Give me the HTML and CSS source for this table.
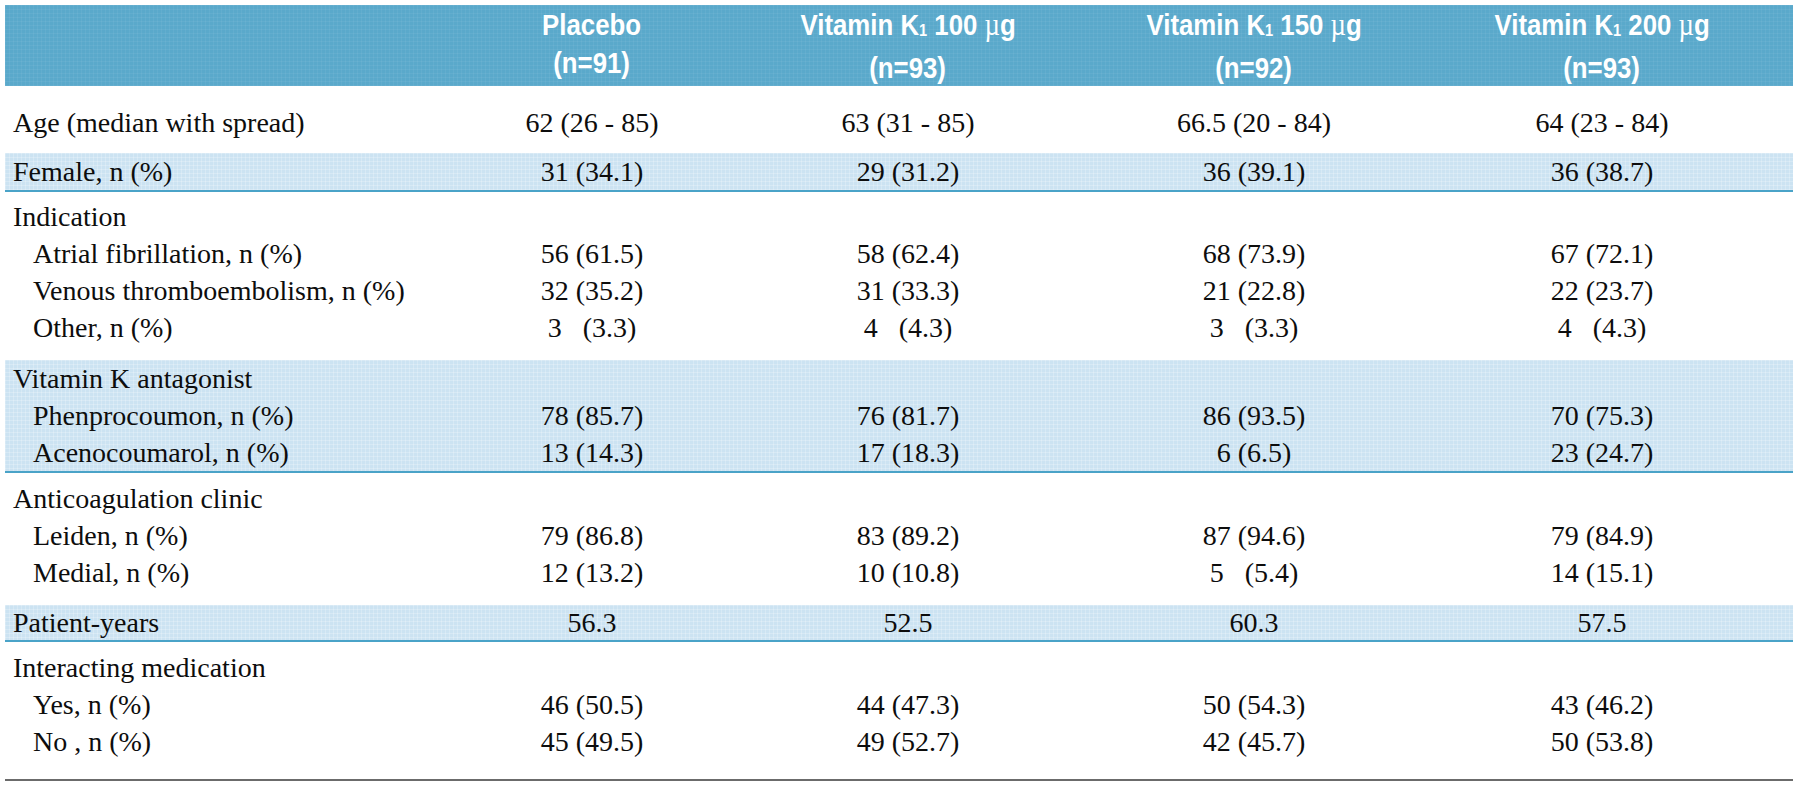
FILE: index.html
```html
<!DOCTYPE html>
<html lang="en">
<head>
<meta charset="utf-8">
<title>Baseline characteristics</title>
<link rel="stylesheet" href="styles.css">
</head>
<body>
<div class="sheet">
  <div class="row head">
    <div class="cell label"></div>
    <div class="cell hcol"><span class="ht">Placebo</span><span class="ht">(n=91)</span></div>
    <div class="cell hcol"><span class="ht">Vitamin K<sub>1</sub> 100 <span class="mu">µ</span>g</span><span class="ht">(n=93)</span></div>
    <div class="cell hcol"><span class="ht">Vitamin K<sub>1</sub> 150 <span class="mu">µ</span>g</span><span class="ht">(n=92)</span></div>
    <div class="cell hcol"><span class="ht">Vitamin K<sub>1</sub> 200 <span class="mu">µ</span>g</span><span class="ht">(n=93)</span></div>
  </div>

  <div class="group g-age">
    <div class="row"><div class="cell label">Age (median with spread)</div><div class="cell val">62 (26 - 85)</div><div class="cell val">63 (31 - 85)</div><div class="cell val">66.5 (20 - 84)</div><div class="cell val">64 (23 - 84)</div></div>
  </div>

  <div class="group band g-female">
    <div class="row"><div class="cell label">Female, n (%)</div><div class="cell val">31 (34.1)</div><div class="cell val">29 (31.2)</div><div class="cell val">36 (39.1)</div><div class="cell val">36 (38.7)</div></div>
  </div>

  <div class="group g-ind">
    <div class="row"><div class="cell label">Indication</div><div class="cell val"></div><div class="cell val"></div><div class="cell val"></div><div class="cell val"></div></div>
    <div class="row"><div class="cell label sub">Atrial fibrillation, n (%)</div><div class="cell val">56 (61.5)</div><div class="cell val">58 (62.4)</div><div class="cell val">68 (73.9)</div><div class="cell val">67 (72.1)</div></div>
    <div class="row"><div class="cell label sub">Venous thromboembolism, n (%)</div><div class="cell val">32 (35.2)</div><div class="cell val">31 (33.3)</div><div class="cell val">21 (22.8)</div><div class="cell val">22 (23.7)</div></div>
    <div class="row"><div class="cell label sub">Other, n (%)</div><div class="cell val">3&nbsp;&nbsp;&nbsp;(3.3)</div><div class="cell val">4&nbsp;&nbsp;&nbsp;(4.3)</div><div class="cell val">3&nbsp;&nbsp;&nbsp;(3.3)</div><div class="cell val">4&nbsp;&nbsp;&nbsp;(4.3)</div></div>
  </div>

  <div class="group band g-vka">
    <div class="row"><div class="cell label">Vitamin K antagonist</div><div class="cell val"></div><div class="cell val"></div><div class="cell val"></div><div class="cell val"></div></div>
    <div class="row"><div class="cell label sub">Phenprocoumon, n (%)</div><div class="cell val">78 (85.7)</div><div class="cell val">76 (81.7)</div><div class="cell val">86 (93.5)</div><div class="cell val">70 (75.3)</div></div>
    <div class="row"><div class="cell label sub">Acenocoumarol, n (%)</div><div class="cell val">13 (14.3)</div><div class="cell val">17 (18.3)</div><div class="cell val">6 (6.5)</div><div class="cell val">23 (24.7)</div></div>
  </div>

  <div class="group g-clinic">
    <div class="row"><div class="cell label">Anticoagulation clinic</div><div class="cell val"></div><div class="cell val"></div><div class="cell val"></div><div class="cell val"></div></div>
    <div class="row"><div class="cell label sub">Leiden, n (%)</div><div class="cell val">79 (86.8)</div><div class="cell val">83 (89.2)</div><div class="cell val">87 (94.6)</div><div class="cell val">79 (84.9)</div></div>
    <div class="row"><div class="cell label sub">Medial, n (%)</div><div class="cell val">12 (13.2)</div><div class="cell val">10 (10.8)</div><div class="cell val">5&nbsp;&nbsp;&nbsp;(5.4)</div><div class="cell val">14 (15.1)</div></div>
  </div>

  <div class="group band g-py">
    <div class="row"><div class="cell label">Patient-years</div><div class="cell val">56.3</div><div class="cell val">52.5</div><div class="cell val">60.3</div><div class="cell val">57.5</div></div>
  </div>

  <div class="group g-inter">
    <div class="row"><div class="cell label">Interacting medication</div><div class="cell val"></div><div class="cell val"></div><div class="cell val"></div><div class="cell val"></div></div>
    <div class="row"><div class="cell label sub">Yes, n (%)</div><div class="cell val">46 (50.5)</div><div class="cell val">44 (47.3)</div><div class="cell val">50 (54.3)</div><div class="cell val">43 (46.2)</div></div>
    <div class="row"><div class="cell label sub">No , n (%)</div><div class="cell val">45 (49.5)</div><div class="cell val">49 (52.7)</div><div class="cell val">42 (45.7)</div><div class="cell val">50 (53.8)</div></div>
  </div>
</div>
</body>
</html>
```

FILE: styles.css
```css
html, body {
  margin: 0;
  padding: 0;
  background: #ffffff;
}

.sheet {
  width: 1788px;
  margin: 5px 0 0 5px;
  font-family: "Liberation Serif", "Times New Roman", serif;
  font-size: 28px;
  color: #0d0d0d;
}

.row {
  display: grid;
  grid-template-columns: 460px 254px 378px 314px 382px;
  line-height: 37px;
  height: 37px;
}

.cell {
  white-space: nowrap;
}

.label {
  padding-left: 8px;
}

.label.sub {
  padding-left: 28px;
}

.val {
  text-align: center;
}

/* Header */
.head {
  height: 81px;
  line-height: 38px;
  padding-top: 1px;
  box-sizing: border-box;
  background-color: #5aa9cb;
  background-image:
    linear-gradient(rgba(255,255,255,0.05) 1px, transparent 1px),
    linear-gradient(90deg, rgba(255,255,255,0.05) 1px, transparent 1px);
  background-size: 4px 4px;
  color: #ffffff;
  font-family: "Liberation Sans", Arial, sans-serif;
  font-weight: bold;
  font-size: 30px;
}

.hcol {
  display: flex;
  flex-direction: column;
  align-items: center;
}

.ht {
  display: block;
  transform: scaleX(0.86);
  transform-origin: center;
}

.hcol .mu {
  font-family: "Liberation Serif", serif;
  font-weight: normal;
  font-size: 31px;
}

.hcol sub {
  font-size: 17px;
  vertical-align: baseline;
  position: relative;
  top: 1px;
}

/* Shaded bands */
.band {
  background-color: #cce3f2;
  background-image:
    linear-gradient(rgba(255,255,255,0.22) 1px, transparent 1px),
    linear-gradient(90deg, rgba(255,255,255,0.22) 1px, transparent 1px);
  background-size: 4px 4px;
  border-bottom: 2px solid #4aa3c8;
}

.g-age {
  padding: 18px 0 12px;
}

.g-ind {
  padding: 6px 0 14px;
}

.g-clinic {
  padding: 7px 0 14px;
}

.g-py .row {
  height: 35px;
  line-height: 35px;
}

.g-inter {
  padding: 7px 0 19px;
  border-bottom: 2px solid #6b6b6b;
}
```
